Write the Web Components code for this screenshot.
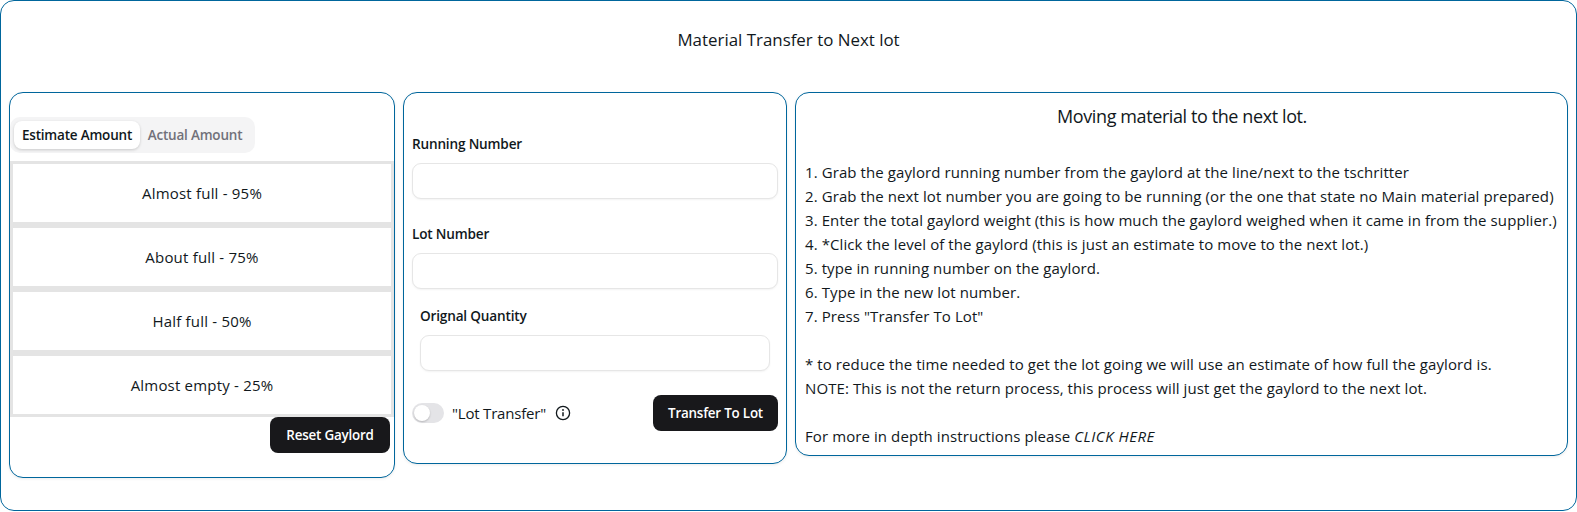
<!DOCTYPE html>
<html lang="en"><head><meta charset="utf-8"><title>Material Transfer</title>
<style>
html,body{margin:0;padding:0;background:#fff}
body{font-family:"Open Sans","Noto Sans",sans-serif;color:#11181c;font-size:14px}
</style></head><body>
<transfer-page>
  <span slot="title">Material Transfer to Next lot</span>
  <x-card style="width:386px;--pad:24px 0 24px 0">
    <x-tabs><span slot="active">Estimate Amount</span><span slot="other">Actual Amount</span></x-tabs>
    <x-option>Almost full - 95%</x-option>
    <x-option>About full - 75%</x-option>
    <x-option>Half full - 50%</x-option>
    <x-option>Almost empty - 25%</x-option>
    <x-row-end><x-btn style="width:120px">Reset Gaylord</x-btn></x-row-end>
  </x-card>
  <x-card style="width:384px;--pad:41px 8px 32px 8px">
    <x-field style="margin-bottom:25px">Running Number</x-field>
    <x-field style="margin-bottom:17px">Lot Number</x-field>
    <x-field style="margin:0 8px 24px">Orignal Quantity</x-field>
    <x-actions>
      <x-toggle></x-toggle><span style="margin-left:8px;font-size:15px;letter-spacing:-.2px">"Lot Transfer"</span><x-info></x-info>
      <x-btn style="width:125px;margin-left:auto">Transfer To Lot</x-btn>
    </x-actions>
  </x-card>
  <x-card style="flex:1;--pad:11px 8px 7px 9px">
    <x-steps>
      <span slot="heading">Moving material to the next lot.</span>
      <div>1. Grab the gaylord running number from the gaylord at the line/next to the tschritter</div>
      <div>2. Grab the next lot number you are going to be running (or the one that state no Main material prepared)</div>
      <div>3. Enter the total gaylord weight (this is how much the gaylord weighed when it came in from the supplier.)</div>
      <div>4. *Click the level of the gaylord (this is just an estimate to move to the next lot.)</div>
      <div>5. type in running number on the gaylord.</div>
      <div>6. Type in the new lot number.</div>
      <div>7. Press "Transfer To Lot"</div>
      <div>&nbsp;</div>
      <div>* to reduce the time needed to get the lot going we will use an estimate of how full the gaylord is.</div>
      <div>NOTE: This is not the return process, this process will just get the gaylord to the next lot.</div>
      <div>&nbsp;</div>
      <div>For more in depth instructions please <em style="letter-spacing:.5px">CLICK HERE</em></div>
    </x-steps>
  </x-card>
</transfer-page>
<script>
function def(name, html){
  customElements.define(name, class extends HTMLElement{
    constructor(){super();this.attachShadow({mode:'open'}).innerHTML=html;}
  });
}
def('transfer-page',`<style>
:host{display:block;box-sizing:border-box;width:1577px;height:511px;border:1px solid #00669c;border-radius:14px;padding:0 8px}
.t{height:91px;padding-top:27px;box-sizing:border-box;text-align:center;font-size:16.9px;line-height:24px}
.r{display:flex;gap:8px;align-items:flex-start}
</style><div class="t"><slot name="title"></slot></div><div class="r"><slot></slot></div>`);
def('x-card',`<style>
:host{display:block;box-sizing:border-box;border:1px solid #00669c;border-radius:14px;padding:var(--pad);box-shadow:0 1px 3px rgba(0,0,0,.08);background:#fff}
</style><slot></slot>`);
def('x-tabs',`<style>
:host{display:flex;box-sizing:border-box;width:245px;height:36px;background:#f4f4f5;border-radius:10px;padding:4px;margin-bottom:8px;font-size:13.5px;font-weight:600;letter-spacing:-.2px;line-height:28px}
.a{width:126px;background:#fff;border-radius:8px;box-shadow:0 1px 3px rgba(0,0,0,.18);text-align:center;white-space:nowrap}
.o{width:110px;color:#71717a;text-align:center;white-space:nowrap}
</style><div class="a"><slot name="active"></slot></div><div class="o"><slot name="other"></slot></div>`);
def('x-option',`<style>
:host{display:flex;box-sizing:border-box;height:64px;border:3px solid #e4e4e4;align-items:center;justify-content:center;font-size:15px;letter-spacing:.2px}
</style><slot></slot>`);
def('x-row-end',`<style>:host{display:flex;justify-content:flex-end;padding-right:4px}</style><slot></slot>`);
def('x-btn',`<style>
:host{display:flex;box-sizing:border-box;height:36px;background:#18181b;color:#fff;border-radius:8px;align-items:center;justify-content:center;font-size:13.4px;font-weight:600;letter-spacing:-.2px;white-space:nowrap}
</style><slot></slot>`);
def('x-field',`<style>
:host{display:block}
.l{font-size:13.6px;font-weight:600;letter-spacing:-.18px;line-height:20px;margin-bottom:9px}
.i{display:block;box-sizing:border-box;width:100%;height:36px;border:1px solid #e6e6e6;border-radius:9px;background:#fff;box-shadow:0 1px 2px rgba(0,0,0,.05);outline:0;padding:0 12px}
</style><div class="l"><slot></slot></div><input class="i" type="text">`);
def('x-actions',`<style>:host{display:flex;align-items:center;height:36px}</style><slot></slot>`);
def('x-toggle',`<style>
:host{display:block;box-sizing:border-box;width:32px;height:20px;border-radius:10px;background:#e4e4e7;padding:2px;flex:none}
b{display:block;width:16px;height:16px;border-radius:50%;background:#fff;box-shadow:0 1px 2px rgba(0,0,0,.2)}
</style><b></b>`);
def('x-info',`<style>:host{display:block;width:16px;height:16px;margin-left:9px;flex:none}svg{display:block}</style>
<svg width="16" height="16" viewBox="0 0 16 16" fill="none" stroke="#11181c"><circle cx="8" cy="8" r="6.6" stroke-width="1.3"/><path d="M8 7.2v4" stroke-width="1.5"/><circle cx="8" cy="5" r=".9" fill="#11181c" stroke="none"/></svg>`);
def('x-steps',`<style>
:host{display:block;font-size:15px;line-height:24px;letter-spacing:.09px;white-space:nowrap}
.h{text-align:center;font-size:18px;line-height:24px;margin-bottom:32px;letter-spacing:-.4px}
</style><div class="h"><slot name="heading"></slot></div><slot></slot>`);
</script>
</body></html>
